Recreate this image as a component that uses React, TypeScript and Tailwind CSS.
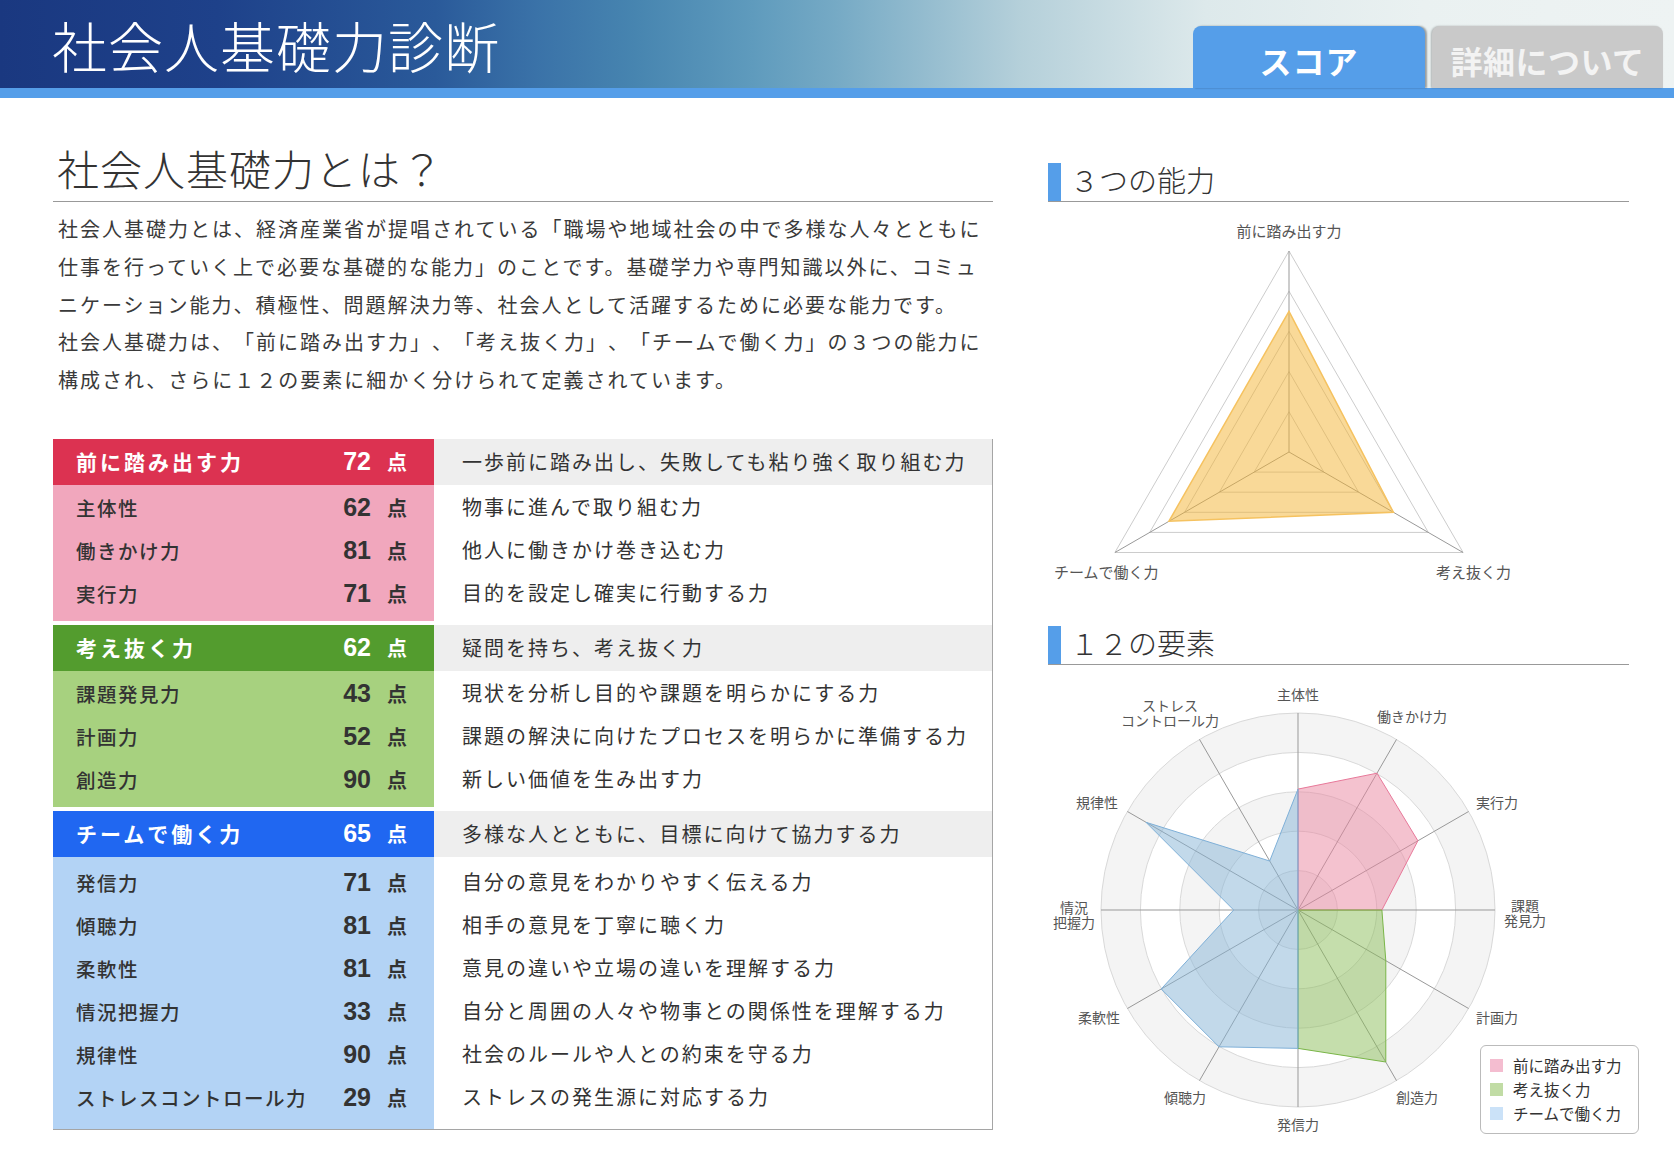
import React from 'react'

type Row = { label: string; score: number; desc: string }
type Section = {
  title: string
  score: number
  desc: string
  head: string
  body: string
  pad: string
  rows: Row[]
}

const sections: Section[] = [
  {
    title: '前に踏み出す力',
    score: 72,
    desc: '一歩前に踏み出し、失敗しても粘り強く取り組む力',
    head: 'bg-[#dc3251]',
    body: 'bg-[#f1a7bd]',
    pad: 'pt-[1px] pb-[6px]',
    rows: [
      { label: '主体性', score: 62, desc: '物事に進んで取り組む力' },
      { label: '働きかけ力', score: 81, desc: '他人に働きかけ巻き込む力' },
      { label: '実行力', score: 71, desc: '目的を設定し確実に行動する力' },
    ],
  },
  {
    title: '考え抜く力',
    score: 62,
    desc: '疑問を持ち、考え抜く力',
    head: 'bg-[#539c2e]',
    body: 'bg-[#a7d17f]',
    pad: 'pt-[1px] pb-[6px]',
    rows: [
      { label: '課題発見力', score: 43, desc: '現状を分析し目的や課題を明らかにする力' },
      { label: '計画力', score: 52, desc: '課題の解決に向けたプロセスを明らかに準備する力' },
      { label: '創造力', score: 90, desc: '新しい価値を生み出す力' },
    ],
  },
  {
    title: 'チームで働く力',
    score: 65,
    desc: '多様な人とともに、目標に向けて協力する力',
    head: 'bg-[#2067f1]',
    body: 'bg-[#b3d3f5]',
    pad: 'pt-[4px] pb-[10px]',
    rows: [
      { label: '発信力', score: 71, desc: '自分の意見をわかりやすく伝える力' },
      { label: '傾聴力', score: 81, desc: '相手の意見を丁寧に聴く力' },
      { label: '柔軟性', score: 81, desc: '意見の違いや立場の違いを理解する力' },
      { label: '情況把握力', score: 33, desc: '自分と周囲の人々や物事との関係性を理解する力' },
      { label: '規律性', score: 90, desc: '社会のルールや人との約束を守る力' },
      { label: 'ストレスコントロール力', score: 29, desc: 'ストレスの発生源に対応する力' },
    ],
  },
]

const intro = [
  '社会人基礎力とは、経済産業省が提唱されている「職場や地域社会の中で多様な人々とともに',
  '仕事を行っていく上で必要な基礎的な能力」のことです。基礎学力や専門知識以外に、コミュ',
  'ニケーション能力、積極性、問題解決力等、社会人として活躍するために必要な能力です。',
  '社会人基礎力は、「前に踏み出す力」、「考え抜く力」、「チームで働く力」の３つの能力に',
  '構成され、さらに１２の要素に細かく分けられて定義されています。',
]

function pt(cx: number, cy: number, r: number, deg: number): [number, number] {
  const a = (deg * Math.PI) / 180
  return [cx + r * Math.cos(a), cy + r * Math.sin(a)]
}

function toPoints(list: [number, number][]): string {
  return list.map(([x, y]) => `${x.toFixed(1)},${y.toFixed(1)}`).join(' ')
}

function Score({ value, light }: { value: number; light?: boolean }) {
  return (
    <span className={`flex items-baseline ${light ? 'text-white' : 'text-[#333]'}`}>
      <span className="w-[60px] text-right font-['Liberation_Sans',Arial,sans-serif] text-[25px] font-bold leading-none">
        {value}
      </span>
      <span className="ml-[16px] text-[20px] font-bold leading-none">点</span>
    </span>
  )
}

function TableSection({ s }: { s: Section }) {
  return (
    <div>
      <div className="flex h-[46px]">
        <div className={`${s.head} flex w-[381px] items-center pl-[23px] pr-[27px] text-white`}>
          <span className="flex-1 text-[21px] font-bold tracking-[3px]">{s.title}</span>
          <Score value={s.score} light />
        </div>
        <div className="flex flex-1 items-center bg-[#eeeeee] pl-[28px] text-[20px] tracking-[2px] text-[#333]">
          {s.desc}
        </div>
      </div>
      <div className="flex">
        <div className={`${s.body} ${s.pad} w-[381px]`}>
          {s.rows.map((r) => (
            <div key={r.label} className="flex h-[43px] items-center pl-[23px] pr-[27px]">
              <span className="flex-1 text-[19.5px] font-medium tracking-[1.5px] text-[#333]">{r.label}</span>
              <Score value={r.score} />
            </div>
          ))}
        </div>
        <div className={`${s.pad} flex-1`}>
          {s.rows.map((r) => (
            <div key={r.label} className="flex h-[43px] items-center pl-[28px] text-[20px] tracking-[2px] text-[#333]">
              {r.desc}
            </div>
          ))}
        </div>
      </div>
    </div>
  )
}

function Heading({ text }: { text: string }) {
  return (
    <div className="flex h-[39px] items-stretch border-b border-[#999]">
      <span className="w-[13px] bg-[#559ee9]" />
      <span className="mb-[5px] ml-[9px] self-center text-[29px] font-light leading-none text-[#333]">
        {text}
      </span>
    </div>
  )
}

function TriangleChart() {
  const cx = 241
  const cy = 250
  const R = 201
  const angles = [-90, 30, 150]
  const rings = [0.2, 0.4, 0.6, 0.8, 1]
  const data = [0.7, 0.6, 0.69]
  return (
    <svg width="581" height="424" className="block">
      {rings.map((k) => (
        <polygon
          key={k}
          points={toPoints(angles.map((a) => pt(cx, cy, R * k, a)))}
          fill="none"
          stroke="#cccccc"
          strokeWidth="1"
        />
      ))}
      {angles.map((a) => {
        const [x, y] = pt(cx, cy, R, a)
        return <line key={a} x1={cx} y1={cy} x2={x} y2={y} stroke="#999" strokeWidth="1" />
      })}
      <polygon
        points={toPoints(angles.map((a, i) => pt(cx, cy, R * data[i], a)))}
        fill="#f4b432"
        fillOpacity="0.5"
        stroke="#f5c260"
        strokeWidth="1.5"
      />
      <g fontSize="15" fill="#555" fontFamily="'Noto Sans CJK JP', sans-serif">
        <text x={cx} y={28} textAnchor="middle" dominantBaseline="central">
          前に踏み出す力
        </text>
        <text x={6} y={369} dominantBaseline="central">
          チームで働く力
        </text>
        <text x={388} y={369} dominantBaseline="central">
          考え抜く力
        </text>
      </g>
    </svg>
  )
}

function PolarChart() {
  const cx = 250
  const cy = 245
  const R = 197
  const k = 1.95
  const vals = [62, 81, 71, 43, 52, 90, 71, 81, 81, 33, 90, 29]
  const ang = (i: number) => -90 + 30 * i
  const p = (i: number) => pt(cx, cy, vals[i] * k, ang(i))
  const C: [number, number] = [cx, cy]
  const bands = [
    { r: R, f: '#f4f4f4' },
    { r: R * 0.8, f: '#ffffff' },
    { r: R * 0.6, f: '#f4f4f4' },
    { r: R * 0.4, f: '#ffffff' },
    { r: R * 0.2, f: '#f4f4f4' },
  ]
  const labels: { t: string[]; x: number; y: number }[] = [
    { t: ['主体性'], x: 250, y: 29 },
    { t: ['働きかけ力'], x: 364, y: 51 },
    { t: ['実行力'], x: 449, y: 137 },
    { t: ['課題', '発見力'], x: 477, y: 247 },
    { t: ['計画力'], x: 449, y: 352 },
    { t: ['創造力'], x: 369, y: 432 },
    { t: ['発信力'], x: 250, y: 459 },
    { t: ['傾聴力'], x: 137, y: 432 },
    { t: ['柔軟性'], x: 51, y: 352 },
    { t: ['情況', '把握力'], x: 26, y: 249 },
    { t: ['規律性'], x: 49, y: 137 },
    { t: ['ストレス', 'コントロール力'], x: 122, y: 47 },
  ]
  return (
    <svg width="581" height="499" className="block">
      {bands.map((b) => (
        <circle key={b.r} cx={cx} cy={cy} r={b.r} fill={b.f} stroke="#d9d9d9" strokeWidth="1" />
      ))}
      {vals.map((_, i) => {
        const [x, y] = pt(cx, cy, R, ang(i))
        return <line key={i} x1={cx} y1={cy} x2={x} y2={y} stroke="#999" strokeWidth="1" />
      })}
      <polygon
        points={toPoints([p(0), p(1), p(2), p(3), C])}
        fill="#e9859f"
        fillOpacity="0.5"
        stroke="#e8799a"
        strokeWidth="1"
      />
      <polygon
        points={toPoints([p(3), p(4), p(5), p(6), C])}
        fill="#8bbd5a"
        fillOpacity="0.5"
        stroke="#7ab648"
        strokeWidth="1"
      />
      <polygon
        points={toPoints([p(6), p(7), p(8), p(9), p(10), p(11), p(0), C])}
        fill="#85b3d6"
        fillOpacity="0.5"
        stroke="#7fb0d8"
        strokeWidth="1"
      />
      <g fontSize="14" fill="#555" fontFamily="'Noto Sans CJK JP', sans-serif" textAnchor="middle">
        {labels.map((l) =>
          l.t.length === 1 ? (
            <text key={l.t[0]} x={l.x} y={l.y} dominantBaseline="central">
              {l.t[0]}
            </text>
          ) : (
            <g key={l.t[0]}>
              <text x={l.x} y={l.y - 7.5} dominantBaseline="central">
                {l.t[0]}
              </text>
              <text x={l.x} y={l.y + 7.5} dominantBaseline="central">
                {l.t[1]}
              </text>
            </g>
          ),
        )}
      </g>
    </svg>
  )
}

function Legend() {
  const items = [
    { c: 'bg-[#f4bdd0]', t: '前に踏み出す力' },
    { c: 'bg-[#c1dca5]', t: '考え抜く力' },
    { c: 'bg-[#cbe2f8]', t: 'チームで働く力' },
  ]
  return (
    <div className="absolute left-[432px] top-[380px] flex h-[89px] w-[159px] flex-col justify-center gap-[4px] rounded-[6px] border border-[#bbbbbb] bg-white pl-[9px]">
      {items.map((i) => (
        <div key={i.t} className="flex h-[20px] items-center">
          <span className={`${i.c} h-[13px] w-[13px]`} />
          <span className="ml-[10px] text-[15.5px] leading-none text-[#333]">{i.t}</span>
        </div>
      ))}
    </div>
  )
}

export default function App() {
  return (
    <div className="min-h-[1164px] w-[1674px] bg-white font-['Noto_Sans_CJK_JP','Noto_Sans',sans-serif] [text-spacing-trim:space-all]">
      <header className="flex h-[88px] justify-between bg-[linear-gradient(90deg,#1a3880_0%,#1e418a_13%,#2a5a9a_26%,#3a72a8_32%,#4785b0_38%,#5f9bbd_45%,#76aac5_50%,#b5d0da_61%,#dde9eb_72%,#eaf1f1_85%,#eef3f3_100%)]">
        <div className="flex items-center pl-[52px]">
          <h1 className="text-[55px] font-extralight leading-none tracking-[1px] text-white">社会人基礎力診断</h1>
        </div>
        <div className="flex items-end gap-[7px] pr-[11px]">
          <div className="flex h-[62px] w-[232px] items-center justify-center rounded-t-[8px] bg-[#559ee9] pt-[6px] text-[32px] font-bold leading-none tracking-[1px] text-white shadow-[2px_0_2px_rgba(0,0,0,0.35)]">
            スコア
          </div>
          <div className="flex h-[62px] w-[231px] items-center justify-center rounded-t-[8px] bg-[#c9c9c9] pt-[6px] text-[32px] font-bold leading-none tracking-[0.5px] text-[#f3f3f3] shadow-[-1px_0_2px_rgba(0,0,0,0.25)]">
            詳細について
          </div>
        </div>
      </header>
      <div className="h-[10px] bg-[#559ee9]" />

      <div className="flex pl-[53px]">
        <div className="w-[940px]">
          <h2 className="mt-[45px] border-b border-[#999] pb-[8px] pl-[4px] text-[42px] font-light leading-[50px] tracking-[1px] text-[#333]">
            社会人基礎力とは？
          </h2>
          <div className="mt-[8px] pl-[5px] text-[20px] leading-[37.75px] tracking-[2px] text-[#3a3a3a]">
            {intro.map((l) => (
              <span key={l} className="block whitespace-nowrap">
                {l}
              </span>
            ))}
          </div>

          <div className="mt-[40px] flex flex-col gap-[4px] border-r border-b border-[#a5a5a5]">
            {sections.map((s) => (
              <TableSection key={s.title} s={s} />
            ))}
          </div>
        </div>

        <div className="ml-[55px] w-[581px]">
          <div className="mt-[65px]">
            <Heading text="３つの能力" />
          </div>
          <TriangleChart />
          <Heading text="１２の要素" />
          <div className="relative">
            <PolarChart />
            <Legend />
          </div>
        </div>
      </div>
    </div>
  )
}
